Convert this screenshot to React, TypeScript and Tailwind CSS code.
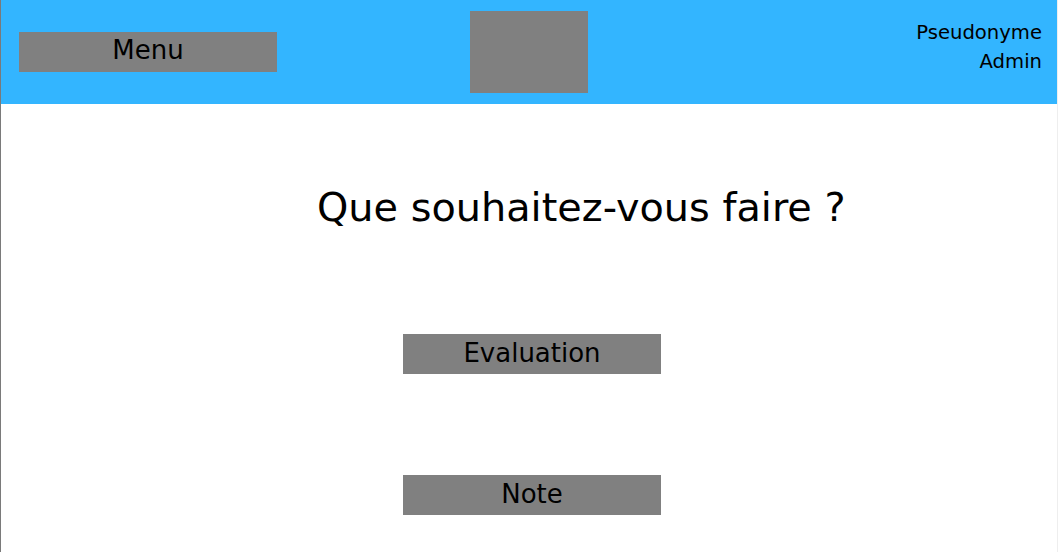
import React from "react";

export default function App() {
  return (
    <div
      className="min-h-screen w-[1058px] border-l border-l-[#7a7a7a] border-r border-r-[#eeeeee] bg-white text-black"
      style={{ fontFamily: '"DejaVu Sans", Verdana, sans-serif' }}
    >
      <header className="grid h-[104px] grid-cols-[1fr_auto_1fr] items-center bg-[#33b5ff]">
        <div className="pl-[18px]">
          <button className="flex h-[40px] w-[258px] items-center justify-center bg-[#808080] pb-[3px] text-[26px] leading-[37px] text-black">
            Menu
          </button>
        </div>
        <div className="h-[82px] w-[118px] bg-[#808080]" />
        <div className="self-start pt-[18px] pr-[15px] text-right text-[19.6px] leading-[29px]">
          <div>Pseudonyme</div>
          <div>Admin</div>
        </div>
      </header>
      <main className="flex flex-col">
        <h1 className="mt-[80px] pl-[316px] text-[39.8px] font-normal leading-[46px]">
          Que souhaitez-vous faire ?
        </h1>
        <div className="mt-[104px] flex flex-col gap-[101px] pl-[402px]">
          <button className="flex h-[40px] w-[258px] items-center justify-center bg-[#808080] pb-[2px] text-[26px] leading-[38px] text-black">
            Evaluation
          </button>
          <button className="flex h-[40px] w-[258px] items-center justify-center bg-[#808080] pb-[2px] text-[26px] leading-[38px] text-black">
            Note
          </button>
        </div>
      </main>
    </div>
  );
}
